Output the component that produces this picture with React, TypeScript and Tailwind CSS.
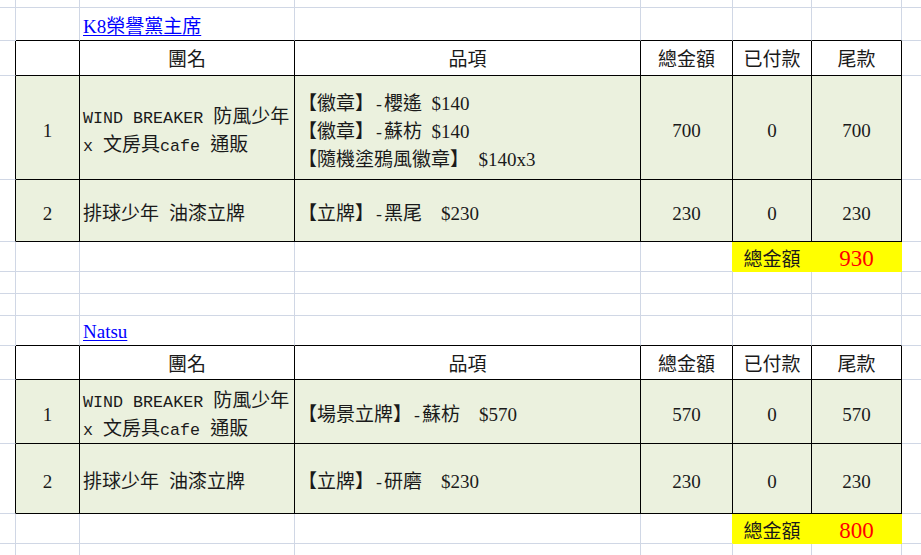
import React from 'react';

type Row = { no: number; name: string[]; items: string[]; total: number; paid: number; due: number };
type Order = { buyer: string; rows: Row[]; sum: number };

const orders: Order[] = [
  {
    buyer: 'K8榮譽黨主席',
    rows: [
      {
        no: 1,
        name: ['WIND BREAKER 防風少年', 'x 文房具cafe 通販'],
        items: ['【徽章】-櫻遙  $140', '【徽章】-蘇枋  $140', '【隨機塗鴉風徽章】  $140x3'],
        total: 700,
        paid: 0,
        due: 700,
      },
      { no: 2, name: ['排球少年 油漆立牌'], items: ['【立牌】-黑尾    $230'], total: 230, paid: 0, due: 230 },
    ],
    sum: 930,
  },
  {
    buyer: 'Natsu',
    rows: [
      {
        no: 1,
        name: ['WIND BREAKER 防風少年', 'x 文房具cafe 通販'],
        items: ['【場景立牌】-蘇枋    $570'],
        total: 570,
        paid: 0,
        due: 570,
      },
      { no: 2, name: ['排球少年 油漆立牌'], items: ['【立牌】-研磨    $230'], total: 230, paid: 0, due: 230 },
    ],
    sum: 800,
  },
];

const headers = ['團名', '品項', '總金額', '已付款', '尾款'];

type Edge = 'g' | 'k' | 'y';

function Cell({
  r = 'g',
  b = 'g',
  className = '',
  children,
}: {
  r?: Edge;
  b?: Edge;
  className?: string;
  children?: React.ReactNode;
}) {
  const rc = r === 'k' ? 'border-r-black' : r === 'y' ? 'border-r-[#ffff00]' : 'border-r-[#d0d7e5]';
  const bc = b === 'k' ? 'border-b-black' : b === 'y' ? 'border-b-[#ffff00]' : 'border-b-[#d0d7e5]';
  return <div className={`min-w-0 border-r border-b ${rc} ${bc} ${className}`}>{children}</div>;
}

const MONO = "font-['Liberation_Mono',monospace] text-[16.7px]";

// half-width latin in the name column is monospaced, like MingLiU
const Mixed = ({ text }: { text: string }) => (
  <>
    {text.split(/([\x20-\x7e]+)/).map((part, i) =>
      /^[\x20-\x7e]+$/.test(part) ? (
        <span key={i} className={MONO}>
          {part}
        </span>
      ) : (
        <span key={i}>{part}</span>
      ),
    )}
  </>
);

// brackets keep a full-width cell, the dash is half-width
const Item = ({ text }: { text: string }) => (
  <>
    {text.split(/([【】-])/).map((part, i) => {
      if (part === '【')
        return (
          <span key={i} className="inline-block w-[19px] text-right">
            【
          </span>
        );
      if (part === '】')
        return (
          <span key={i} className="inline-block w-[19px] text-left">
            】
          </span>
        );
      if (part === '-')
        return (
          <span key={i} className={MONO}>
            -
          </span>
        );
      return <span key={i}>{part}</span>;
    })}
  </>
);

const BlankRow = () => (
  <>
    {Array.from({ length: 8 }).map((_, i) => (
      <Cell key={i} />
    ))}
  </>
);

function OrderBlock({ order }: { order: Order }) {
  return (
    <>
      {/* buyer title */}
      <Cell />
      <Cell b="k" />
      <Cell b="k" className="flex items-end pl-[3px] pb-[1px] overflow-visible">
        <a href="#" className="text-[#0000ff] underline underline-offset-[2px] leading-[24px] whitespace-nowrap">
          {order.buyer}
        </a>
      </Cell>
      <Cell b="k" />
      <Cell b="k" />
      <Cell b="k" />
      <Cell b="k" />
      <Cell />

      {/* header */}
      <Cell r="k" />
      <Cell r="k" b="k" />
      {headers.map((h) => (
        <Cell key={h} r="k" b="k" className="flex items-center justify-center pt-[5px]">
          {h}
        </Cell>
      ))}
      <Cell />

      {/* items */}
      {order.rows.map((row) => (
        <React.Fragment key={row.no}>
          <Cell r="k" />
          <Cell r="k" b="k" className="flex items-center justify-center bg-[#ebf1de] pt-[8px]">
            {row.no}
          </Cell>
          <Cell r="k" b="k" className="flex flex-col justify-center bg-[#ebf1de] pl-[3px] pt-[8px] leading-[26px] whitespace-pre">
            {row.name.map((l) => (
              <div key={l}>
                <Mixed text={l} />
              </div>
            ))}
          </Cell>
          <Cell r="k" b="k" className="flex flex-col justify-center bg-[#ebf1de] pl-[3px] pt-[8px] leading-[26px] whitespace-pre">
            {row.items.map((l) => (
              <div key={l}>
                <Item text={l} />
              </div>
            ))}
          </Cell>
          <Cell r="k" b="k" className="flex items-center justify-center bg-[#ebf1de] pt-[8px]">
            {row.total}
          </Cell>
          <Cell r="k" b="k" className="flex items-center justify-center bg-[#ebf1de] pt-[8px]">
            {row.paid}
          </Cell>
          <Cell r="k" b="k" className="flex items-center justify-center bg-[#ebf1de] pt-[8px]">
            {row.due}
          </Cell>
          <Cell />
        </React.Fragment>
      ))}

      {/* sum */}
      <Cell />
      <Cell />
      <Cell />
      <Cell />
      <Cell r="y" />
      <Cell r="y" b="y" className="flex items-center justify-center bg-[#ffff00] pt-[7px]">
        總金額
      </Cell>
      <Cell r="y" b="y" className="flex items-center justify-center bg-[#ffff00] pt-[6px] text-[23px] text-[#ff0000]">
        {order.sum}
      </Cell>
      <Cell />
    </>
  );
}

export default function App() {
  return (
    <div className="h-[555px] w-[921px] overflow-hidden bg-white font-['Liberation_Serif','Noto_Sans_CJK_TC',serif] text-[19px] text-[#1a1a1a]">
      <div className="grid grid-cols-[16px_64px_215px_346px_92px_79px_90px_30px] grid-rows-[8px_33px_35px_104px_62px_30px_22px_22px_30px_34px_64px_70px_30px_30px]">
        <BlankRow />
        <OrderBlock order={orders[0]} />
        <BlankRow />
        <BlankRow />
        <OrderBlock order={orders[1]} />
        <BlankRow />
      </div>
    </div>
  );
}
